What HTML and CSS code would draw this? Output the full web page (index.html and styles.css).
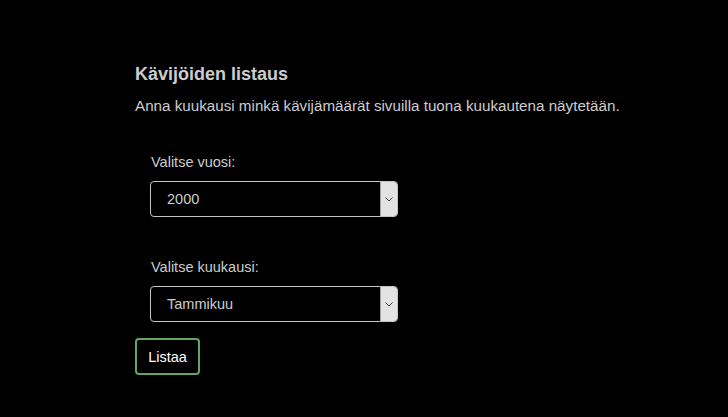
FILE: index.html
```html
<!DOCTYPE html>
<html lang="fi">
<head>
<meta charset="utf-8">
<link rel="stylesheet" href="styles.css">
<title>Kävijöiden listaus</title>
</head>
<body>
<main class="page">
  <h1 class="title">Kävijöiden listaus</h1>
  <p class="intro">Anna kuukausi minkä kävijämäärät sivuilla tuona kuukautena näytetään.</p>
  <form class="form">
    <div class="field">
      <label class="label">Valitse vuosi:</label>
      <div class="select">
        <span class="select-value">2000</span>
        <span class="select-arrow"><svg width="8" height="5" viewBox="0 0 8 5"><path d="M0.5 0.5 L4 4 L7.5 0.5" fill="none" stroke="#444" stroke-width="1"/></svg></span>
      </div>
    </div>
    <div class="field field-second">
      <label class="label">Valitse kuukausi:</label>
      <div class="select">
        <span class="select-value">Tammikuu</span>
        <span class="select-arrow"><svg width="8" height="5" viewBox="0 0 8 5"><path d="M0.5 0.5 L4 4 L7.5 0.5" fill="none" stroke="#444" stroke-width="1"/></svg></span>
      </div>
    </div>
    <button type="button" class="btn">Listaa</button>
  </form>
</main>
</body>
</html>
```
FILE: styles.css
```css
html, body {
  margin: 0;
  padding: 0;
  background: #000;
}
.page {
  padding: 63px 0 0 135px;
  color: #cccccc;
}
.title {
  margin: 0;
  font-family: "Liberation Sans", Arial, sans-serif;
  font-weight: bold;
  font-size: 18px;
  line-height: 22px;
}
.intro {
  margin: 11px 0 0;
  font-family: "Liberation Sans", Arial, sans-serif;
  font-size: 15.2px;
  line-height: 20px;
}
.form {
  display: flex;
  flex-direction: column;
  align-items: flex-start;
  margin-top: 36px;
  font-family: "Liberation Sans", Arial, sans-serif;
}
.field {
  display: flex;
  flex-direction: column;
  padding-left: 15px;
}
.field-second {
  margin-top: 40px;
}
.label {
  font-size: 14.5px;
  line-height: 20px;
  padding-left: 1px;
  color: #cccccc;
}
.select {
  margin-top: 9px;
  width: 248px;
  height: 36px;
  box-sizing: border-box;
  border: 1px solid #c4c4c4;
  border-radius: 4px;
  display: flex;
  align-items: stretch;
  overflow: hidden;
}
.select-value {
  flex: 1;
  display: flex;
  align-items: center;
  padding-left: 16px;
  font-size: 14.5px;
  color: #cccccc;
}
.select-arrow {
  width: 16px;
  background: #e3e3e3;
  border-left: 1px solid #a0a0a0;
  display: flex;
  align-items: center;
  justify-content: center;
}
.btn {
  margin-top: 16px;
  width: 65px;
  height: 37px;
  background: #000;
  color: #fff;
  border: 2px solid #5fa85f;
  border-radius: 4px;
  font-family: "Liberation Sans", Arial, sans-serif;
  font-size: 14.5px;
  padding: 0;
}
```
